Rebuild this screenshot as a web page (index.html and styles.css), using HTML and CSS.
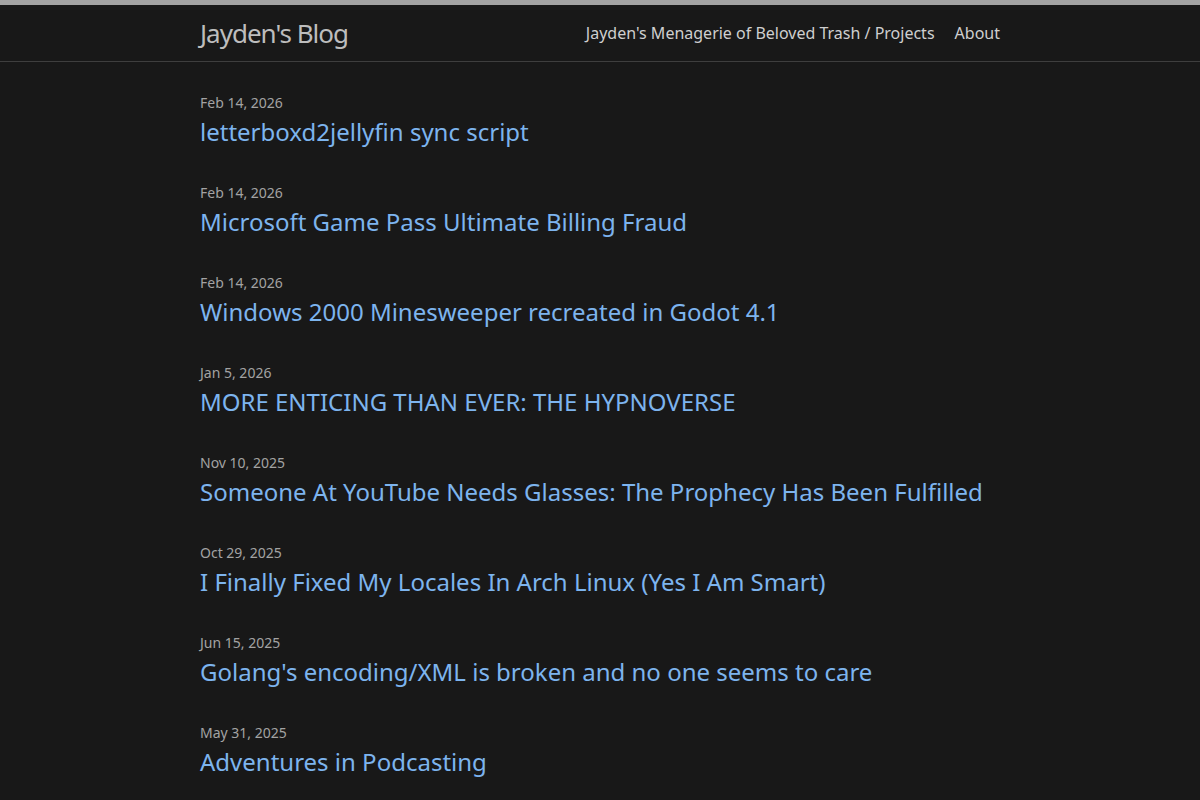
FILE: index.html
```html
<!DOCTYPE html>
<html>
<head>
    <meta charset="utf-8">
    <title>Jayden's Blog</title>
    <link rel="stylesheet" href="styles.css">
</head>
<body>
    <header class="site-header">
        <div class="wrapper header-row">
            <a class="site-title" href="#">Jayden's Blog</a>
            <nav class="site-nav">
                <a class="page-link" href="#">Jayden's Menagerie of Beloved Trash / Projects</a>
                <a class="page-link" href="#">About</a>
            </nav>
        </div>
    </header>

    <main class="page-content">
        <div class="wrapper">
            <ul class="post-list">
                <li>
                    <span class="post-meta">Feb 14, 2026</span>
                    <h3><a class="post-link" href="#">letterboxd2jellyfin sync script</a></h3>
                </li>
                <li>
                    <span class="post-meta">Feb 14, 2026</span>
                    <h3><a class="post-link" href="#">Microsoft Game Pass Ultimate Billing Fraud</a></h3>
                </li>
                <li>
                    <span class="post-meta">Feb 14, 2026</span>
                    <h3><a class="post-link" href="#">Windows 2000 Minesweeper recreated in Godot 4.1</a></h3>
                </li>
                <li>
                    <span class="post-meta">Jan 5, 2026</span>
                    <h3><a class="post-link" href="#">MORE ENTICING THAN EVER: THE HYPNOVERSE</a></h3>
                </li>
                <li>
                    <span class="post-meta">Nov 10, 2025</span>
                    <h3><a class="post-link" href="#">Someone At YouTube Needs Glasses: The Prophecy Has Been Fulfilled</a></h3>
                </li>
                <li>
                    <span class="post-meta">Oct 29, 2025</span>
                    <h3><a class="post-link" href="#">I Finally Fixed My Locales In Arch Linux (Yes I Am Smart)</a></h3>
                </li>
                <li>
                    <span class="post-meta">Jun 15, 2025</span>
                    <h3><a class="post-link" href="#">Golang's encoding/XML is broken and no one seems to care</a></h3>
                </li>
                <li>
                    <span class="post-meta">May 31, 2025</span>
                    <h3><a class="post-link" href="#">Adventures in Podcasting</a></h3>
                </li>
            </ul>
        </div>
    </main>
</body>
</html>
```

FILE: styles.css
```css
body {
    margin: 0;
    background: #181818;
    color: #d0d0d0;
    font-family: "Noto Sans", "Open Sans", sans-serif;
    font-size: 16px;
    line-height: 1.5;
}

a {
    text-decoration: none;
}

.wrapper {
    max-width: 800px;
    margin: 0 auto;
}

.site-header {
    border-top: 5px solid #a3a3a3;
    border-bottom: 1px solid #3e3e3e;
}

.header-row {
    display: flex;
    justify-content: space-between;
    align-items: center;
    height: 56px;
}

.site-title {
    font-size: 26px;
    font-weight: 400;
    letter-spacing: -1px;
    color: #bdbdbd;
    line-height: 56px;
}

.site-nav {
    display: flex;
    gap: 20px;
    line-height: 56px;
}

.page-link {
    color: #cfcfcf;
}

.page-content {
    padding-top: 30px;
}

.post-list {
    list-style: none;
    margin: 0;
    padding: 0;
}

.post-list li {
    margin-bottom: 31px;
}

.post-meta {
    display: block;
    font-size: 14px;
    line-height: 21px;
    color: #a3a3a3;
}

.post-list h3 {
    margin: 0;
    font-size: 24px;
    font-weight: 400;
    line-height: 38px;
}

.post-link {
    color: #7db4ee;
}
```
